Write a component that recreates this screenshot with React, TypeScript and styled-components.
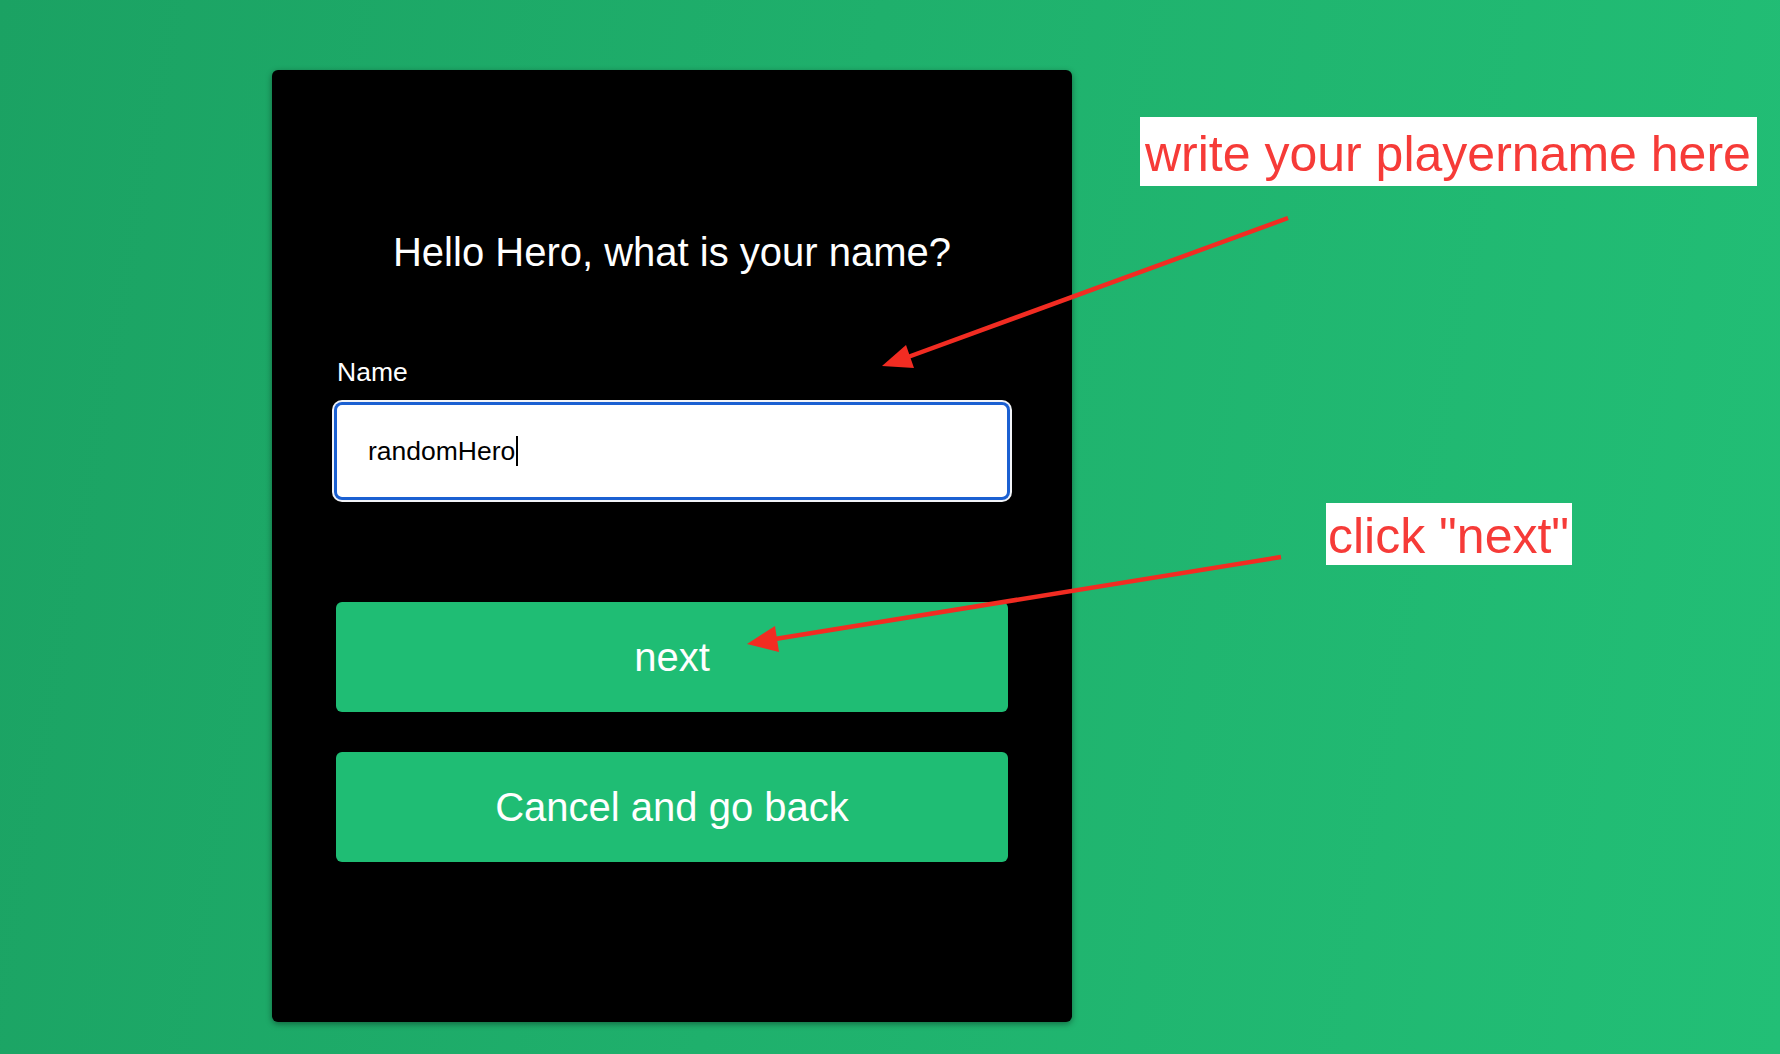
import React from 'react';
import styled, { createGlobalStyle } from 'styled-components';

const GlobalStyle = createGlobalStyle`
  html, body {
    margin: 0;
    padding: 0;
  }

  body {
    font-family: 'Liberation Sans', Arial, sans-serif;
  }
`;

const Page = styled.div`
  position: relative;
  width: 1780px;
  height: 1054px;
  overflow: hidden;
  box-sizing: border-box;
  padding: 70px 0 0 272px;
  background: linear-gradient(100deg, #1ba263 0%, #1fb06c 45%, #22bf76 100%);
`;

const Card = styled.div`
  display: flex;
  flex-direction: column;
  width: 800px;
  height: 952px;
  box-sizing: border-box;
  padding: 159px 64px 0;
  background-color: #000;
  border-radius: 6px;
  box-shadow: 0 2px 6px rgba(0, 0, 0, 0.4);
  color: #fff;
`;

const Title = styled.h1`
  margin: 0 0 82px;
  font-size: 40px;
  font-weight: 400;
  line-height: 46px;
  text-align: center;
`;

const Label = styled.label`
  font-size: 26.5px;
  line-height: 31px;
  margin: 0 0 14px 1px;
`;

const Field = styled.div`
  display: flex;
  align-items: center;
  height: 98px;
  margin: 0 -2px;
  box-sizing: border-box;
  padding: 0 34px;
  background-color: #fff;
  border-radius: 8px;
  box-shadow: inset 0 0 0 3px #1b60d2, 0 0 0 2px #f2f4f8;
  color: #000;
  font-size: 26.5px;
`;

const Caret = styled.span`
  display: inline-block;
  width: 2px;
  height: 30px;
  margin-left: 1px;
  background-color: #000;
`;

const Button = styled.button<{ $gap?: number }>`
  height: 110px;
  margin-top: ${({ $gap }) => $gap ?? 40}px;
  border: none;
  border-radius: 6px;
  background-color: #1fbd74;
  color: #fff;
  font-family: 'Liberation Sans', Arial, sans-serif;
  font-size: 40px;
  cursor: pointer;
`;

const Callout = styled.div<{ $x: number; $y: number; $pad: string }>`
  position: absolute;
  left: ${({ $x }) => $x}px;
  top: ${({ $y }) => $y}px;
  padding: ${({ $pad }) => $pad};
  background-color: #fff;
  color: #f63b38;
  font-size: 50px;
  line-height: 57px;
  white-space: nowrap;
`;

const Arrows = styled.svg`
  position: absolute;
  left: 0;
  top: 0;
  pointer-events: none;
`;

const App = () => {
  return (
    <>
      <GlobalStyle />
      <Page>
        <Card>
          <Title>Hello Hero, what is your name?</Title>
          <Label>Name</Label>
          <Field>
            randomHero
            <Caret />
          </Field>
          <Button $gap={102}>next</Button>
          <Button>Cancel and go back</Button>
        </Card>

        <Callout $x={1140} $y={117} $pad="9px 6px 3px 5px">
          write your playername here
        </Callout>
        <Callout $x={1326} $y={503} $pad="5px 3px 0 2px">
          click "next"
        </Callout>

        <Arrows width="1780" height="1054" viewBox="0 0 1780 1054">
          <line x1="1288" y1="218" x2="908" y2="357" stroke="#f22c22" strokeWidth="4.5" />
          <polygon points="882,366 906,345 914,368" fill="#f22c22" />
          <line x1="1281" y1="557" x2="775" y2="639" stroke="#f22c22" strokeWidth="4.5" />
          <polygon points="747,644 775,626 779,652" fill="#f22c22" />
        </Arrows>
      </Page>
    </>
  );
};

export default App;
